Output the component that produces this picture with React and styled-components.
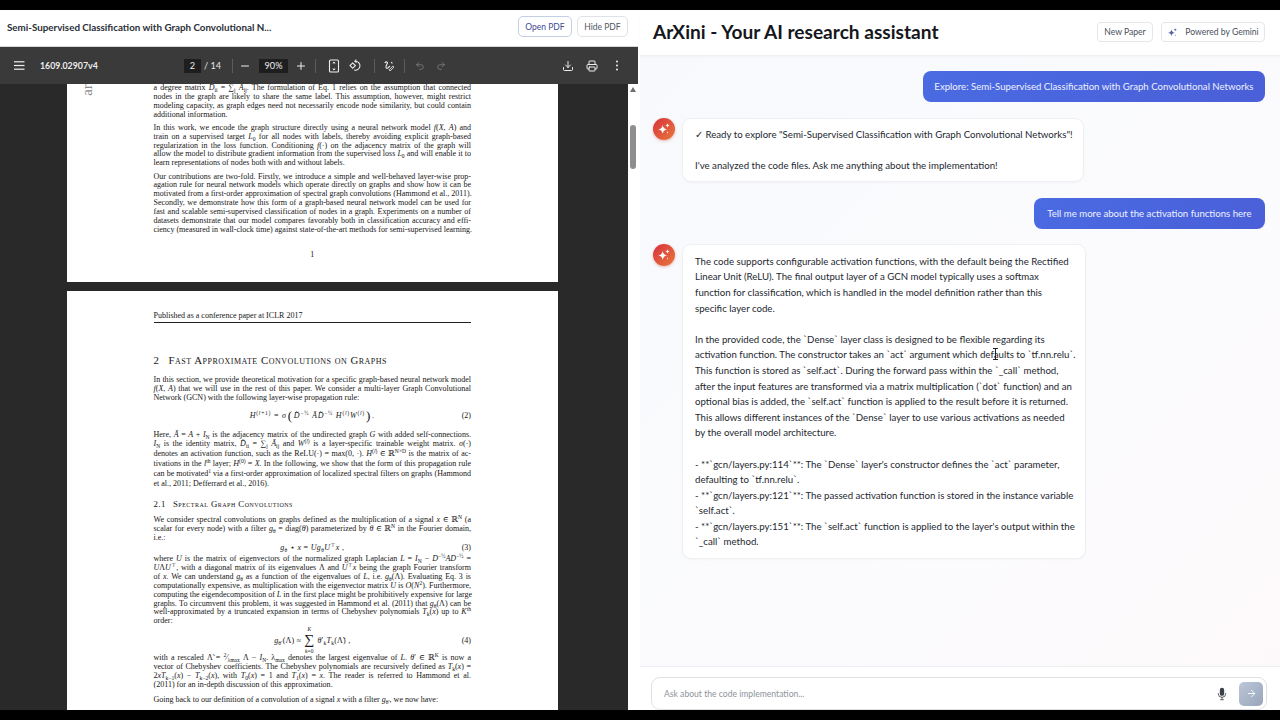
import React from 'react';
import styled, { createGlobalStyle } from 'styled-components';
import { ArrowRight, Download, Minus, Plus, Printer, Redo2, Undo2 } from 'lucide-react';

const UI = `"Lato", "Open Sans", sans-serif`;

const Global = createGlobalStyle`
  html, body { margin: 0; padding: 0; background: #000; }
  body { font-family: ${UI}; }
  * { box-sizing: border-box; }
`;

const Shell = styled.div`
  width: 1280px; height: 720px; padding: 10px 0;
  display: grid; grid-template-columns: 640px 640px;
  background: #000; overflow: hidden;
`;

/* ---------- left: PDF panel ---------- */
const PdfPanel = styled.section`
  height: 700px; display: flex; flex-direction: column;
  background: #fff; padding-right: 2px; overflow: hidden;
`;
const PdfHeader = styled.header`
  height: 37px; flex: none; display: flex; align-items: center; gap: 5px;
  padding: 0 10px 3px 7px; background: #fff; border-bottom: 1px solid #d6d6d6;
`;
const PdfName = styled.h2`
  margin: 0 auto 0 0; font-size: 9.8px; font-weight: 700; color: #2b2f38; white-space: nowrap;
`;
const HeadButton = styled.button`
  height: 21px; border-radius: 5px; background: #fff; padding: 0;
  width: ${p => p.$w}px; font: 400 8.5px ${UI};
  color: ${p => p.$accent ? '#3f4a94' : '#4f5664'};
  border: 1px solid ${p => p.$accent ? '#c3cfe2' : '#dfe3e8'};
`;
const PdfBar = styled.div`
  height: 37px; flex: none; display: flex; align-items: center;
  padding: 0 11px 0 9px; background: #3a3a3a; color: #f1f1f1;
`;
const BarFile = styled.span`
  margin-left: 11px; width: 144px; font-size: 8.8px; font-weight: 700; color: #ececec; white-space: nowrap;
`;
const NumBox = styled.span`
  height: 14px; width: ${p => p.$w}px; background: #1e1e1e; color: #eee;
  display: flex; align-items: center; justify-content: center;
  font-size: 9.2px; margin-left: ${p => p.$ml || 0}px;
`;
const BarCount = styled.span`
  margin-left: 3px; width: 16px; font-size: 9.2px; color: #e6e6e6; white-space: nowrap;
`;
const BarSep = styled.span`
  width: 1px; height: 14px; background: #5c5c5c; margin-left: ${p => p.$ml || 0}px;
`;
const ToolBtn = styled.span`
  width: 20px; height: 20px; flex: none; display: flex; align-items: center; justify-content: center;
  margin-left: ${p => p.$ml || 0}px; color: ${p => p.$dim ? '#7d7d7d' : '#eeeeee'};
`;
const BarEnd = styled.div`
  margin-left: auto; display: flex; gap: 4px;
`;
const PdfBody = styled.div`
  flex: 1; min-height: 0; display: flex;
`;
const PdfScroll = styled.div`
  flex: 1; background: #292929; overflow: hidden; padding-left: 67px;
`;
const Page = styled.article`
  position: relative; width: 491px; height: ${p => p.$h}px; background: #fff;
  margin-bottom: 9px; padding: ${p => p.$pt || 0}px 87px 0 86.5px; color: #161616;
  font-family: "Liberation Serif", "DejaVu Serif", serif; font-size: 8.02px;
`;
const Stamp = styled.span`
  position: absolute; left: 14px; top: -2px; font-size: 15px; color: #8a8a8a;
  transform: rotate(-90deg); transform-origin: center; line-height: 16px;
`;
const Para = styled.div`
  margin-top: ${p => p.$mt || 0}px;
`;
const Line = styled.div`
  height: ${p => p.$lh || 8.85}px; line-height: ${p => p.$lh || 8.85}px; white-space: nowrap;
  text-align: justify; text-align-last: ${p => p.$short ? 'left' : 'justify'};
`;
const PageNo = styled.div`
  margin-top: 15px; text-align: center; line-height: 9px;
`;
const RunHead = styled.div`
  line-height: 8.85px; padding-bottom: 1px; border-bottom: 1px solid #222;
`;
const Heading = styled.h3`
  margin: ${p => p.$mt}px 0 0; font-weight: 400; font-variant: small-caps; white-space: nowrap;
  font-size: ${p => p.$size}px; line-height: ${p => p.$lh}px; letter-spacing: ${p => p.$track}px;
`;
const HeadNum = styled.span`
  display: inline-block; width: ${p => p.$w}px;
`;
const Equation = styled.div`
  margin-top: ${p => p.$mt}px; height: ${p => p.$h}px;
  display: grid; grid-template-columns: 1fr auto 1fr; align-items: center; white-space: nowrap;
`;
const EqNo = styled.span`
  justify-self: end; grid-column: 3;
`;
const EqBody = styled.span`
  grid-column: 2; display: inline-flex; align-items: center; gap: 1px; letter-spacing: ${p => p.$track || 0}px;
`;
const BigParen = styled.span`
  font-size: 13px; line-height: 10px; font-weight: 400;
`;
const Sub = styled.sub`
  font-size: 5.6px; line-height: 0; vertical-align: -1.5px;
`;
const Sup = styled.sup`
  font-size: 5.6px; line-height: 0; vertical-align: 3px;
`;
const SumStack = styled.span`
  display: inline-flex; flex-direction: column; align-items: center; margin: 0 2px;
  font-size: 5.4px; line-height: 6px;
`;
const SumSign = styled.span`
  font-size: 14px; line-height: 16px;
`;
const Track = styled.div`
  width: 10px; flex: none; position: relative; background: #fff;
`;
const TrackArrow = styled.span`
  position: absolute; left: 2px; top: 3px; width: 0; height: 0;
  border-left: 3px solid transparent; border-right: 3px solid transparent; border-bottom: 5px solid #6e6e6e;
`;
const TrackThumb = styled.span`
  position: absolute; left: 2px; top: 41px; width: 6px; height: 44px; border-radius: 3px; background: #8e8e8e;
`;

/* ---------- right: chat panel ---------- */
const ChatPanel = styled.section`
  height: 700px; display: flex; flex-direction: column; background: #fff;
`;
const ChatHeader = styled.header`
  height: 46px; flex: none; display: flex; align-items: center; gap: 8px;
  padding: 0 15px 1px 13px; background: #fff; border-bottom: 1px solid #eef0f2;
  box-shadow: 0 1px 2px rgba(0,0,0,.03); position: relative;
`;
const ChatTitle = styled.h1`
  margin: 0 auto 1px 0; font-size: 19.1px; font-weight: 700; color: #15171c; white-space: nowrap;
`;
const ChatButton = styled.button`
  height: 20px; width: ${p => p.$w}px; border: 1px solid #e3e6ea; border-radius: 4px; background: #fff;
  display: flex; align-items: center; justify-content: center; gap: 7px; padding: 0;
  font: 400 8.6px ${UI}; color: #4a505c;
`;
const Thread = styled.div`
  flex: 1; min-height: 0; padding: 15px 15px 0 13px; display: flex; flex-direction: column; gap: 15.5px;
  background: linear-gradient(135deg, #f7f9fc 0%, #fbfbfd 55%, #fdf9fb 100%);
`;
const UserBubble = styled.div`
  flex: none; align-self: flex-end; height: 31px; padding: 0 ${p => p.$pad}px; display: flex; align-items: center;
  border-radius: 8px; background: linear-gradient(135deg, #4a6be2, #4a5fd8);
  color: #eef2ff; font-size: 9.62px; white-space: nowrap;
`;
const BotRow = styled.div`
  flex: none; display: flex; gap: 7px; align-items: flex-start;
`;
const Avatar = styled.span`
  width: 22px; height: 22px; flex: none; border-radius: 50%; display: flex; align-items: center; justify-content: center;
  background: linear-gradient(135deg, #d9303f, #e8793a); box-shadow: 0 1px 3px rgba(200,60,50,.35);
`;
const BotBubble = styled.div`
  position: relative; padding: 8.5px 12px 7.5px; background: #fff; border: 1px solid #eef0f3; border-radius: 9px;
  box-shadow: 0 1px 2px rgba(0,0,0,.03);
  width: ${p => p.$w}px; color: #23272f; font-size: 9.66px; line-height: 15.6px; white-space: pre;
`;
const TextCursor = styled.svg`
  position: absolute; left: 309px; top: 103px;
`;
const InputBar = styled.div`
  height: 44px; flex: none; padding: 10px 13px 0 11px; background: #fff; border-top: 1px solid #eceef1;
`;
const InputBox = styled.div`
  height: 33px; border: 1px solid #dde1e6; border-radius: 9px; display: flex; align-items: center;
  padding: 0 3px 0 12px; background: #fff;
`;
const Ask = styled.input`
  flex: 1; min-width: 0; border: 0; outline: 0; background: transparent; padding: 0;
  font: 400 8.6px ${UI}; color: #333;
  &::placeholder { color: #8e939b; opacity: 1; }
`;
const MicBtn = styled.span`
  display: flex; width: 12px; margin-right: 10px;
`;
const SendBtn = styled.span`
  width: 24px; height: 24px; border-radius: 5px; display: flex; align-items: center; justify-content: center;
  color: #fff; background: linear-gradient(135deg, #bcc7d8, #98a5ba);
`;

const I = styled.i``;

const Sparkles = ({ color = '#fff', size = 14 }) => (
  <svg width={size} height={size} viewBox="0 0 16 16" fill={color}>
    <path d="M6.5 3.5 C7 6.5 8.5 8 11.5 8.5 C8.5 9 7 10.5 6.5 13.5 C6 10.5 4.5 9 1.5 8.5 C4.5 8 6 6.5 6.5 3.5Z" />
    <path d="M12 1.5 C12.2 3 13 3.8 14.5 4 C13 4.2 12.2 5 12 6.5 C11.8 5 11 4.2 9.5 4 C11 3.8 11.8 3 12 1.5Z" />
    <path d="M12 10.5 C12.1 11.5 12.5 11.9 13.5 12 C12.5 12.1 12.1 12.5 12 13.5 C11.9 12.5 11.5 12.1 10.5 12 C11.5 11.9 11.9 11.5 12 10.5Z" />
  </svg>
);

const MenuIcon = () => (
  <svg width="11" height="9" viewBox="0 0 11 9" fill="#eee"><rect y="0.2" width="10.5" height="1.2" /><rect y="3.9" width="10.5" height="1.2" /><rect y="7.6" width="10.5" height="1.2" /></svg>
);
const FitIcon = () => (
  <svg width="12" height="14" viewBox="0 0 12 14" fill="none" stroke="#eee" strokeWidth="1.1">
    <rect x="1.5" y="1" width="9" height="12" rx="1" />
    <path d="M6 3.2 V4.8 M4.7 4.2 L6 3 L7.3 4.2 M6 10.8 V9.2 M4.7 9.8 L6 11 L7.3 9.8" strokeWidth="0.9" />
  </svg>
);
const RotateIcon = () => (
  <svg width="14" height="13" viewBox="0 0 16 15" fill="none" stroke="#eee" strokeWidth="1.2">
    <path d="M7 2.5 A5.2 5.2 0 1 1 6 12.7" />
    <path d="M8.5 0.6 L6.6 2.5 L8.5 4.3" />
    <rect x="2" y="5.4" width="4.4" height="4.4" transform="rotate(45 4.2 7.6)" />
  </svg>
);
const DrawIcon = () => (
  <svg width="12" height="12" viewBox="0 0 14 14" fill="none" stroke="#eee" strokeWidth="1.3">
    <path d="M2 3.5 C3.5 1.5 6 2 5 4 C4 6 2.5 8 4 9.5 C5 10.5 6.5 8.5 8 7" />
    <path d="M7 11.5 L11.5 7 L12.8 8.3 L8.3 12.8 Z" strokeWidth="1" />
    <path d="M9.5 2.5 L11 4" />
  </svg>
);
const DotsIcon = () => (
  <svg width="4" height="11" viewBox="0 0 4 12" fill="#eee"><circle cx="2" cy="1.6" r="1.1" /><circle cx="2" cy="6" r="1.1" /><circle cx="2" cy="10.4" r="1.1" /></svg>
);
const MicIcon = () => (
  <svg width="10" height="14" viewBox="0 0 12 16" fill="#3c4048">
    <rect x="3.4" y="0.6" width="5.2" height="9.6" rx="2.6" />
    <path d="M1.6 6.8 V7.6 A4.4 4.4 0 0 0 10.4 7.6 V6.8" fill="none" stroke="#3c4048" strokeWidth="1" />
    <rect x="5.5" y="11.6" width="1" height="3" /><rect x="3.8" y="14.4" width="4.4" height="1" />
  </svg>
);

const Tx = ({ children, short, lh }) => <Line $short={short} $lh={lh}>{children}</Line>;

const Htilde = <I>D̃</I>;

const PageOne = () => (
  <Page $h={198}>
    <Stamp>ar</Stamp>
    <Para>
      <Tx>a degree matrix <I>D</I><Sub>ii</Sub> = ∑<Sub>j</Sub> <I>A</I><Sub>ij</Sub>. The formulation of Eq. 1 relies on the assumption that connected</Tx>
      <Tx>nodes in the graph are likely to share the same label. This assumption, however, might restrict</Tx>
      <Tx>modeling capacity, as graph edges need not necessarily encode node similarity, but could contain</Tx>
      <Tx short>additional information.</Tx>
    </Para>
    <Para $mt={4.5}>
      <Tx>In this work, we encode the graph structure directly using a neural network model <I>f</I>(<I>X</I>, <I>A</I>) and</Tx>
      <Tx>train on a supervised target <I>L</I><Sub>0</Sub> for all nodes with labels, thereby avoiding explicit graph-based</Tx>
      <Tx>regularization in the loss function. Conditioning <I>f</I>(·) on the adjacency matrix of the graph will</Tx>
      <Tx>allow the model to distribute gradient information from the supervised loss <I>L</I><Sub>0</Sub> and will enable it to</Tx>
      <Tx short>learn representations of nodes both with and without labels.</Tx>
    </Para>
    <Para $mt={4.5}>
      <Tx>Our contributions are two-fold. Firstly, we introduce a simple and well-behaved layer-wise prop-</Tx>
      <Tx>agation rule for neural network models which operate directly on graphs and show how it can be</Tx>
      <Tx>motivated from a first-order approximation of spectral graph convolutions (Hammond et al., 2011).</Tx>
      <Tx>Secondly, we demonstrate how this form of a graph-based neural network model can be used for</Tx>
      <Tx>fast and scalable semi-supervised classification of nodes in a graph. Experiments on a number of</Tx>
      <Tx>datasets demonstrate that our model compares favorably both in classification accuracy and effi-</Tx>
      <Tx>ciency (measured in wall-clock time) against state-of-the-art methods for semi-supervised learning.</Tx>
    </Para>
    <PageNo>1</PageNo>
  </Page>
);

const PageTwo = () => (
  <Page $h={440} $pt={21.2}>
    <RunHead>Published as a conference paper at ICLR 2017</RunHead>
    <Heading $mt={32} $size={10.8} $lh={11} $track={0.5}><HeadNum $w={15}>2</HeadNum>Fast Approximate Convolutions on Graphs</Heading>
    <Para $mt={10}>
      <Tx>In this section, we provide theoretical motivation for a specific graph-based neural network model</Tx>
      <Tx><I>f</I>(<I>X</I>, <I>A</I>) that we will use in the rest of this paper. We consider a multi-layer Graph Convolutional</Tx>
      <Tx short>Network (GCN) with the following layer-wise propagation rule:</Tx>
    </Para>
    <Equation $mt={6} $h={14}>
      <EqBody $track={0.75}><span><I>H</I><Sup>(<I>l</I>+1)</Sup> = <I>σ</I> </span><BigParen>(</BigParen><span>{Htilde}<Sup>−½</Sup> <I>Ã</I>{Htilde}<Sup>−½</Sup> <I>H</I><Sup>(<I>l</I>)</Sup><I>W</I><Sup>(<I>l</I>)</Sup></span><BigParen>)</BigParen><span> .</span></EqBody>
      <EqNo>(2)</EqNo>
    </Equation>
    <Para $mt={7}>
      <Tx lh={9.9}>Here, <I>Ã</I> = <I>A</I> + <I>I</I><Sub>N</Sub> is the adjacency matrix of the undirected graph <I>G</I> with added self-connections.</Tx>
      <Tx lh={9.9}><I>I</I><Sub>N</Sub> is the identity matrix, {Htilde}<Sub>ii</Sub> = ∑<Sub>j</Sub> <I>Ã</I><Sub>ij</Sub> and <I>W</I><Sup>(<I>l</I>)</Sup> is a layer-specific trainable weight matrix. <I>σ</I>(·)</Tx>
      <Tx lh={9.9}>denotes an activation function, such as the ReLU(·) = max(0, ·). <I>H</I><Sup>(<I>l</I>)</Sup> ∈ ℝ<Sup>N×D</Sup> is the matrix of ac-</Tx>
      <Tx lh={9.9}>tivations in the <I>l</I><Sup>th</Sup> layer; <I>H</I><Sup>(0)</Sup> = <I>X</I>. In the following, we show that the form of this propagation rule</Tx>
      <Tx lh={9.9}>can be motivated<Sup>1</Sup> via a first-order approximation of localized spectral filters on graphs (Hammond</Tx>
      <Tx lh={9.9} short>et al., 2011; Defferrard et al., 2016).</Tx>
    </Para>
    <Heading $mt={9.6} $size={8.8} $lh={10} $track={0.47}><HeadNum $w={19.5}>2.1</HeadNum>Spectral Graph Convolutions</Heading>
    <Para $mt={7.8}>
      <Tx>We consider spectral convolutions on graphs defined as the multiplication of a signal <I>x</I> ∈ ℝ<Sup>N</Sup> (a</Tx>
      <Tx>scalar for every node) with a filter <I>g</I><Sub>θ</Sub> = diag(<I>θ</I>) parameterized by <I>θ</I> ∈ ℝ<Sup>N</Sup> in the Fourier domain,</Tx>
      <Tx short>i.e.:</Tx>
    </Para>
    <Equation $mt={0} $h={8.85}>
      <EqBody $track={0.3}><span><I>g</I><Sub>θ</Sub> ⋆ <I>x</I> = <I>U</I><I>g</I><Sub>θ</Sub><I>U</I><Sup>⊤</Sup><I>x</I> ,</span></EqBody>
      <EqNo>(3)</EqNo>
    </Equation>
    <Para $mt={3.7}>
      <Tx>where <I>U</I> is the matrix of eigenvectors of the normalized graph Laplacian <I>L</I> = <I>I</I><Sub>N</Sub> − <I>D</I><Sup>−½</Sup><I>AD</I><Sup>−½</Sup> =</Tx>
      <Tx><I>U</I>Λ<I>U</I><Sup>⊤</Sup>, with a diagonal matrix of its eigenvalues Λ and <I>U</I><Sup>⊤</Sup><I>x</I> being the graph Fourier transform</Tx>
      <Tx>of <I>x</I>. We can understand <I>g</I><Sub>θ</Sub> as a function of the eigenvalues of <I>L</I>, i.e. <I>g</I><Sub>θ</Sub>(Λ). Evaluating Eq. 3 is</Tx>
      <Tx>computationally expensive, as multiplication with the eigenvector matrix <I>U</I> is <I>O</I>(<I>N</I><Sup>2</Sup>). Furthermore,</Tx>
      <Tx>computing the eigendecomposition of <I>L</I> in the first place might be prohibitively expensive for large</Tx>
      <Tx>graphs. To circumvent this problem, it was suggested in Hammond et al. (2011) that <I>g</I><Sub>θ</Sub>(Λ) can be</Tx>
      <Tx>well-approximated by a truncated expansion in terms of Chebyshev polynomials <I>T</I><Sub>k</Sub>(<I>x</I>) up to <I>K</I><Sup>th</Sup></Tx>
      <Tx short>order:</Tx>
    </Para>
    <Equation $mt={0} $h={19}>
      <EqBody $track={0.2}>
        <span><I>g</I><Sub>θ′</Sub>(Λ) ≈</span>
        <SumStack><I>K</I><SumSign>∑</SumSign><span><I>k</I>=0</span></SumStack>
        <span><I>θ</I>′<Sub>k</Sub><I>T</I><Sub>k</Sub>(Λ̃) ,</span>
      </EqBody>
      <EqNo>(4)</EqNo>
    </Equation>
    <Para $mt={9.3}>
      <Tx lh={8.95}>with a rescaled Λ̃ = <Sup>2</Sup>⁄<Sub>λmax</Sub> Λ − <I>I</I><Sub>N</Sub>. λ<Sub>max</Sub> denotes the largest eigenvalue of <I>L</I>. <I>θ</I>′ ∈ ℝ<Sup>K</Sup> is now a</Tx>
      <Tx lh={8.95}>vector of Chebyshev coefficients. The Chebyshev polynomials are recursively defined as <I>T</I><Sub>k</Sub>(<I>x</I>) =</Tx>
      <Tx lh={8.95}>2<I>xT</I><Sub>k−1</Sub>(<I>x</I>) − <I>T</I><Sub>k−2</Sub>(<I>x</I>), with <I>T</I><Sub>0</Sub>(<I>x</I>) = 1 and <I>T</I><Sub>1</Sub>(<I>x</I>) = <I>x</I>. The reader is referred to Hammond et al.</Tx>
      <Tx lh={8.95} short>(2011) for an in-depth discussion of this approximation.</Tx>
    </Para>
    <Para $mt={6.2}>
      <Tx short>Going back to our definition of a convolution of a signal <I>x</I> with a filter <I>g</I><Sub>θ′</Sub>, we now have:</Tx>
    </Para>
  </Page>
);

const answer = `The code supports configurable activation functions, with the default being the Rectified
Linear Unit (ReLU). The final output layer of a GCN model typically uses a softmax
function for classification, which is handled in the model definition rather than this
specific layer code.

In the provided code, the \`Dense\` layer class is designed to be flexible regarding its
activation function. The constructor takes an \`act\` argument which defaults to \`tf.nn.relu\`.
This function is stored as \`self.act\`. During the forward pass within the \`_call\` method,
after the input features are transformed via a matrix multiplication (\`dot\` function) and an
optional bias is added, the \`self.act\` function is applied to the result before it is returned.
This allows different instances of the \`Dense\` layer to use various activations as needed
by the overall model architecture.

- **\`gcn/layers.py:114\`**: The \`Dense\` layer's constructor defines the \`act\` parameter,
defaulting to \`tf.nn.relu\`.
- **\`gcn/layers.py:121\`**: The passed activation function is stored in the instance variable
\`self.act\`.
- **\`gcn/layers.py:151\`**: The \`self.act\` function is applied to the layer's output within the
\`_call\` method.`;

export default function App() {
  return (
    <Shell>
      <Global />
      <PdfPanel>
        <PdfHeader>
          <PdfName>Semi-Supervised Classification with Graph Convolutional N...</PdfName>
          <HeadButton $accent $w={54}>Open PDF</HeadButton>
          <HeadButton $w={51}>Hide PDF</HeadButton>
        </PdfHeader>
        <PdfBar>
          <ToolBtn><MenuIcon /></ToolBtn>
          <BarFile>1609.02907v4</BarFile>
          <NumBox $w={17}>2</NumBox>
          <BarCount>/ 14</BarCount>
          <BarSep $ml={12} />
          <ToolBtn $ml={2}><Minus size={12} /></ToolBtn>
          <NumBox $w={29} $ml={4}>90%</NumBox>
          <ToolBtn $ml={3}><Plus size={12} /></ToolBtn>
          <BarSep $ml={4} />
          <ToolBtn $ml={8}><FitIcon /></ToolBtn>
          <ToolBtn $ml={2}><RotateIcon /></ToolBtn>
          <BarSep $ml={8} />
          <ToolBtn $ml={4}><DrawIcon /></ToolBtn>
          <BarSep $ml={5} />
          <ToolBtn $ml={5} $dim><Undo2 size={10} /></ToolBtn>
          <ToolBtn $ml={1} $dim><Redo2 size={10} /></ToolBtn>
          <BarEnd>
            <ToolBtn><Download size={12} /></ToolBtn>
            <ToolBtn><Printer size={12} /></ToolBtn>
            <ToolBtn $ml={1}><DotsIcon /></ToolBtn>
          </BarEnd>
        </PdfBar>
        <PdfBody>
          <PdfScroll>
            <PageOne />
            <PageTwo />
          </PdfScroll>
          <Track>
            <TrackArrow />
            <TrackThumb />
          </Track>
        </PdfBody>
      </PdfPanel>
      <ChatPanel>
        <ChatHeader>
          <ChatTitle>ArXini - Your AI research assistant</ChatTitle>
          <ChatButton $w={56}>New Paper</ChatButton>
          <ChatButton $w={104}><Sparkles color="#5562a8" size={11} />Powered by Gemini</ChatButton>
        </ChatHeader>
        <Thread>
          <UserBubble $pad={11.5}>Explore: Semi-Supervised Classification with Graph Convolutional Networks</UserBubble>
          <BotRow>
            <Avatar><Sparkles /></Avatar>
            <BotBubble $w={402}>{`✓ Ready to explore "Semi-Supervised Classification with Graph Convolutional Networks"!

I've analyzed the code files. Ask me anything about the implementation!`}</BotBubble>
          </BotRow>
          <UserBubble $pad={13.5}>Tell me more about the activation functions here</UserBubble>
          <BotRow>
            <Avatar><Sparkles /></Avatar>
            <BotBubble $w={404}>
              {answer}
              <TextCursor width="7" height="12" viewBox="0 0 7 12" fill="none" stroke="#222" strokeWidth="1">
                <path d="M1 .5 H6 M3.5 .5 V11.5 M1 11.5 H6" />
              </TextCursor>
            </BotBubble>
          </BotRow>
        </Thread>
        <InputBar>
          <InputBox>
            <Ask placeholder="Ask about the code implementation..." readOnly />
            <MicBtn><MicIcon /></MicBtn>
            <SendBtn><ArrowRight size={11} /></SendBtn>
          </InputBox>
        </InputBar>
      </ChatPanel>
    </Shell>
  );
}
